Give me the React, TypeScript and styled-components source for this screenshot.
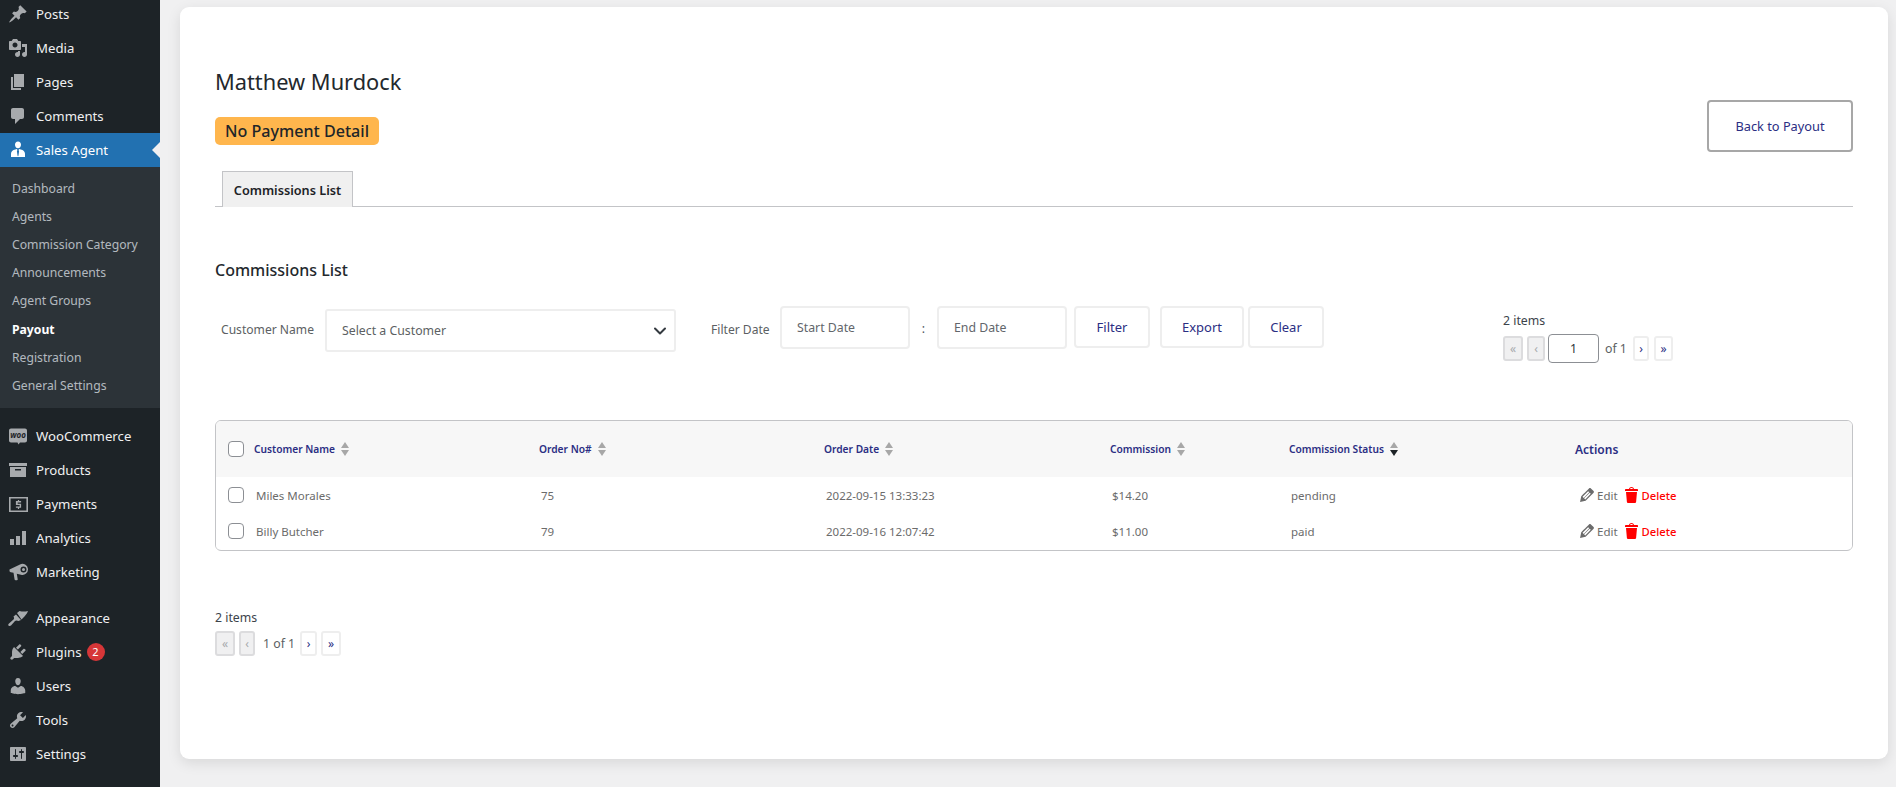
import { ReactNode } from 'react';
import styled, { createGlobalStyle } from 'styled-components';

const GlobalStyle = createGlobalStyle`
	html, body {
		margin: 0;
		padding: 0;
		background: #f0f0f1;
		overflow: hidden;
	}
	body {
		font-family: 'Noto Sans', 'Open Sans', sans-serif;
		font-size: 12.3px;
		color: #3c434a;
	}
	* {
		box-sizing: border-box;
	}
`;

const Page = styled.div`
	display: flex;
	width: 1896px;
	height: 787px;
	overflow: hidden;
`;

const Sidebar = styled.aside`
	flex: 0 0 160px;
	height: 787px;
	background: #1d2327;
	padding-top: 0;
	overflow: hidden;
`;

const MenuList = styled.ul`
	list-style: none;
	margin: -3px 0 0;
	padding: 0;
`;

const MenuGroup = styled.ul<{ $top: number }>`
	list-style: none;
	margin: ${(props) => props.$top}px 0 0;
	padding: 0;
`;

const MenuItem = styled.li<{ $active?: boolean }>`
	position: relative;
	display: flex;
	align-items: center;
	height: 34px;
	padding-left: 8px;
	color: ${(props) => (props.$active ? '#fff' : '#f0f0f1')};
	background: ${(props) => (props.$active ? '#2271b1' : 'transparent')};
	font-size: 13.2px;

	svg {
		flex: 0 0 20px;
		width: 20px;
		height: 20px;
		margin-right: 8px;
		fill: ${(props) => (props.$active ? '#fff' : '#a7aaad')};
		color: ${(props) => (props.$active ? '#fff' : '#a7aaad')};
	}

	${(props) =>
		props.$active &&
		`&::after {
			content: '';
			position: absolute;
			right: 0;
			top: 9px;
			border: 8px solid transparent;
			border-right-color: #f0f0f1;
		}`}
`;

const Count = styled.span`
	display: inline-flex;
	align-items: center;
	justify-content: center;
	width: 18px;
	height: 18px;
	margin-left: 5px;
	border-radius: 50%;
	background: #d63638;
	color: #fff;
	font-size: 11px;
`;

const SubMenu = styled.ul`
	list-style: none;
	margin: 0;
	padding: 7px 0 8.4px;
	background: #2c3338;
`;

const SubItem = styled.li<{ $current?: boolean }>`
	display: flex;
	align-items: center;
	height: 28.2px;
	padding-left: 12px;
	font-size: 12.2px;
	color: ${(props) => (props.$current ? '#fff' : 'rgba(240, 246, 252, 0.7)')};
	font-weight: ${(props) => (props.$current ? 700 : 400)};
`;

const Card = styled.main`
	width: 1708px;
	height: 752px;
	margin: 7px 0 0 20px;
	padding: 59px 35px 0;
	background: #fff;
	border-radius: 9px;
	box-shadow: 0 4px 14px rgba(0, 0, 0, 0.1);
`;

const Header = styled.header`
	display: flex;
	justify-content: space-between;
	align-items: flex-start;
`;

const Title = styled.h1`
	margin: 0;
	font-size: 21.8px;
	line-height: 32px;
	font-weight: 400;
	color: #23282d;
`;

const Badge = styled.div`
	display: inline-block;
	height: 28px;
	margin-top: 19px;
	padding: 0 10px;
	border-radius: 5px;
	background: #ffb64d;
	color: #212529;
	font-size: 16.1px;
	line-height: 28px;
	font-weight: 500;
`;

const BackButton = styled.button`
	width: 146px;
	height: 52px;
	margin-top: 34px;
	background: #fff;
	border: 2px solid #a7a7a7;
	border-radius: 4px;
	color: #2b2e83;
	font-family: inherit;
	font-size: 12.8px;
`;

const TabBar = styled.div`
	display: flex;
	height: 36px;
	margin-top: 19px;
	padding-left: 7px;
	border-bottom: 1px solid #c3c4c7;
`;

const Tab = styled.div`
	display: flex;
	align-items: center;
	justify-content: center;
	width: 131px;
	height: 36px;
	background: #f0f0f0;
	border: 1px solid #c3c4c7;
	border-bottom: none;
	color: #1d2327;
	font-size: 12.7px;
	font-weight: 600;
`;

const SectionTitle = styled.h2`
	margin: 51px 0 0;
	font-size: 16px;
	line-height: 24px;
	font-weight: 500;
	color: #23282d;
`;

const FilterRow = styled.div`
	display: flex;
	align-items: flex-start;
	height: 114px;
	margin-top: 24px;
`;

const FilterLabel = styled.label<{ $left: number; $width: number }>`
	width: ${(props) => props.$width}px;
	margin-left: ${(props) => props.$left}px;
	margin-top: 15px;
	font-size: 12.1px;
	line-height: 18px;
	color: #5c5f63;
	white-space: nowrap;
`;

const SelectBox = styled.div`
	display: flex;
	align-items: center;
	justify-content: space-between;
	width: 351px;
	height: 43px;
	margin-top: 3px;
	padding: 0 8px 0 15px;
	border: 2px solid #eee;
	border-radius: 3px;
	color: #5c5f63;
	svg {
		width: 12px;
		height: 12px;
	}
`;

const DateInput = styled.input`
	width: 130px;
	height: 43px;
	padding: 0 15px;
	border: 2px solid #eee;
	border-radius: 4px;
	font-family: inherit;
	font-size: 12.3px;
	&::placeholder {
		color: #62666b;
		opacity: 1;
	}
`;

const Separator = styled.span`
	width: 27px;
	margin-top: 14px;
	line-height: 18px;
	text-align: center;
	color: #50575e;
`;

const PlainButton = styled.button<{ $width: number; $left: number }>`
	width: ${(props) => props.$width}px;
	height: 42px;
	margin-left: ${(props) => props.$left}px;
	background: #fff;
	border: 2px solid #eee;
	border-radius: 4px;
	color: #2b2e83;
	font-family: inherit;
	font-size: 13px;
`;

const TopPager = styled.div`
	margin-left: 179px;
	margin-top: 6px;
`;

const ItemCount = styled.div`
	font-size: 12.3px;
	line-height: 18px;
	color: #3c434a;
`;

const PagerRow = styled.div<{ $top: number }>`
	display: flex;
	align-items: center;
	height: 29px;
	margin-top: ${(props) => props.$top}px;
`;

const PageBtn = styled.span<{ $disabled?: boolean; $width: number; $left?: number }>`
	display: flex;
	align-items: center;
	justify-content: center;
	width: ${(props) => props.$width}px;
	height: 25px;
	margin-left: ${(props) => props.$left ?? 0}px;
	border: 2px solid ${(props) => (props.$disabled ? '#dcdcde' : '#eee')};
	border-radius: 3px;
	background: ${(props) => (props.$disabled ? '#f0f0f1' : '#fff')};
	color: ${(props) => (props.$disabled ? '#a7aaad' : '#2b2e83')};
	font-size: 12px;
	line-height: 1;
`;

const PageInput = styled.div`
	display: flex;
	align-items: center;
	justify-content: center;
	width: 51px;
	height: 29px;
	margin-left: 3px;
	border: 1px solid #8c8f94;
	border-radius: 4px;
	color: #2c3338;
`;

const PageText = styled.span<{ $left: number; $width: number }>`
	width: ${(props) => props.$width}px;
	margin-left: ${(props) => props.$left}px;
	color: #5c5f63;
	white-space: nowrap;
`;

const TableBox = styled.div`
	height: 131px;
	border: 1px solid #c3c4c7;
	border-radius: 6px;
	overflow: hidden;
`;

const Row = styled.div<{ $head?: boolean }>`
	display: grid;
	grid-template-columns: 311px 285px 286px 179px 286px 1fr;
	align-items: center;
	height: ${(props) => (props.$head ? 56 : 36)}px;
	padding-left: 12px;
	background: ${(props) => (props.$head ? '#f7f7f7' : '#fff')};
`;

const FirstCell = styled.div`
	display: flex;
	align-items: center;
`;

const Check = styled.span`
	flex: 0 0 16px;
	width: 16px;
	height: 16px;
	margin-right: 10px;
	border: 1px solid #8c8f94;
	border-radius: 4px;
	background: #fff;
`;

const HeadCell = styled.div`
	display: flex;
	align-items: center;
	color: #2b2e83;
	font-size: 10.2px;
	font-weight: 600;
	white-space: nowrap;
`;

const ActionsHead = styled(HeadCell)`
	font-size: 12px;
`;

const SortArrows = styled.svg`
	width: 8px;
	height: 16px;
	margin-left: 6px;
`;

const Cell = styled.div`
	padding-left: 2px;
	color: #6b6b6b;
	font-size: 11.5px;
	white-space: nowrap;
`;

const Actions = styled.div`
	display: flex;
	align-items: center;
	padding-left: 2px;
	font-size: 11.5px;
	color: #6b6b6b;
`;

const ActionIcon = styled.svg`
	width: 20px;
	height: 20px;
	fill: currentColor;
`;

const DeleteLink = styled.span`
	display: flex;
	align-items: center;
	margin-left: 4px;
	color: #f00;
	font-size: 11.2px;
	font-weight: 500;
`;

const BottomPager = styled.div`
	margin-top: 58px;
`;

const icons: Record<string, ReactNode> = {
	posts: (
		<path d="M10.44 3.02l1.82-1.82 6.36 6.35-1.83 1.82c-1.05-.68-2.48-.57-3.41.36l-.75.75c-.92.93-1.04 2.35-.35 3.41l-1.83 1.82-2.41-2.41-2.8 2.79c-.42.42-3.38 2.71-3.8 2.29s1.86-3.39 2.28-3.81l2.79-2.79L4.1 9.36l1.83-1.82c1.05.69 2.48.57 3.4-.36l.75-.75c.93-.92 1.05-2.35.36-3.41z" />
	),
	media: (
		<path d="M13 11V4c0-.55-.45-1-1-1h-1.67L9 1H5L3.67 3H2c-.55 0-1 .45-1 1v7c0 .55.45 1 1 1h10c.55 0 1-.45 1-1zM7 4.5c1.38 0 2.5 1.12 2.5 2.5S8.38 9.5 7 9.5 4.5 8.38 4.5 7 5.62 4.5 7 4.5zM14 6h5v10.5c0 1.38-1.12 2.5-2.5 2.5S14 17.88 14 16.5s1.12-2.5 2.5-2.5c.17 0 .34.02.5.05V9h-3V6zm-4 8.05V13h2v3.5c0 1.38-1.12 2.5-2.5 2.5S7 17.88 7 16.5 8.12 14 9.5 14c.17 0 .34.02.5.05z" />
	),
	pages: <path d="M6 15V2h10v13H6zm-1 1h8v2H3V5h2v11z" />,
	comments: (
		<path d="M5 2h9c1.1 0 2 .9 2 2v7c0 1.1-.9 2-2 2h-2l-5 5v-5H5c-1.1 0-2-.9-2-2V4c0-1.1.9-2 2-2z" />
	),
	agent: (
		<path d="M10 1.5c1.9 0 3 1.5 3 3.2 0 1.8-1.2 3.6-3 3.6S7 6.5 7 4.7c0-1.7 1.1-3.2 3-3.2zM7.2 9.5l1.6-.4.7 1-.6 1 .6 4.4.5.9.5-.9.6-4.4-.6-1 .7-1 1.6.4c2.5.6 4.2 1.9 4.2 4.2V17H3v-3.3c0-2.3 1.7-3.6 4.2-4.2z" />
	),
	woo: (
		<>
			<path d="M3 2.5h14c1.1 0 2 .9 2 2v10c0 1.1-.9 2-2 2h-5l-1.5 2-1-2H3c-1.1 0-2-.9-2-2v-10c0-1.1.9-2 2-2z" />
			<text x="10" y="12" textAnchor="middle" fontSize="8" fontWeight="700" fontStyle="italic" fill="#1d2327">
				woo
			</text>
		</>
	),
	products: <path d="M1 3h18v3H1V3zm1 4h16v10H2V7zm5 2v1.5h6V9H7z" />,
	payments: (
		<>
			<path fillRule="evenodd" d="M1 3h19v15H1V3zm1.6 1.6v11.800h15.800V4.600H2.600z" />
			<path d="M9.900 6h1.200v1.100h2v1.400H9.700v1.300h3.400v4H11.100v1.200H9.900v-1.200h-2v-1.400h3.800v-1.300H7.900v-4h2V6z" />
		</>
	),
	analytics: <path d="M2 11h4v6H2v-6zm6-3h4v9H8V8zm6-5h4v14h-4V3z" />,
	marketing: (
		<path
			fillRule="evenodd"
			d="M1.500 7.500L12 2.500A5.500 5.500 0 1 1 13 12.700L8.800 11.700l.9 5.600c.1.600-.3 1-.9 1H7.600c-.5 0-.9-.3-1-.8L5.500 10.800l-2.700-.6C2 10 1.500 9.500 1.500 8.800zM15.500 4.500a3 3 0 1 0 0 6 3 3 0 1 0 0-6zM15.500 6a1.500 1.500 0 1 1 0 3 1.500 1.500 0 1 1 0-3z"
		/>
	),
	appearance: (
		<>
			<path d="M9 5l2.500-2c2.500.5 4.500 1 8.500 0-1 3-3.500 5.500-5 7l-1.500 1.500z" />
			<path d="M8 6.500L13 12l-2.500 1c-1-.5-2.500-1-3.500 0L3 17.500c-.5.5-2 .8-2.500 0-.5-.7-.2-1.500.5-2l4.500-4c1-1 .5-2 0-3z" />
		</>
	),
	plugins: (
		<path d="M13.110 4.360L9.870 7.600 8 5.730l3.240-3.240c.35-.34 1.050-.2 1.560.32.52.51.66 1.210.31 1.550zm-8 1.770l.91-1.120 9.010 9.010-1.190.84c-.71.71-2.630 1.160-3.820 1.160H6.140L4.900 17.260c-.59.59-1.540.59-2.120 0-.59-.58-.59-1.530 0-2.120l1.240-1.240v-3.880c0-1.130.4-3.190 1.090-3.890zm7.260 3.970l3.240-3.240c.34-.35 1.040-.21 1.550.31.52.51.66 1.210.31 1.550l-3.240 3.250z" />
	),
	users: (
		<path d="M10 9.250c-2.270 0-2.730-3.440-2.730-3.440C7 4.020 7.820 2 9.970 2c2.160 0 2.980 2.020 2.710 3.810 0 0-.41 3.440-2.680 3.440zm0 2.570L12.720 10c2.390 0 4.520 2.330 4.520 4.530v2.490s-3.650 1.130-7.240 1.130c-3.650 0-7.240-1.130-7.240-1.130v-2.490c0-2.250 1.940-4.480 4.470-4.480z" />
	),
	tools: (
		<path d="M16.680 9.770c-1.340 1.340-3.300 1.670-4.950.99l-5.410 6.520c-.99.99-2.590.99-3.580 0s-.99-2.590 0-3.570l6.520-5.420c-.68-1.650-.35-3.610.99-4.950 1.280-1.280 3.120-1.620 4.720-1.060l-2.890 2.890 2.820 2.820 2.860-2.870c.53 1.580.18 3.390-1.080 4.650zM3.810 16.210c.4.39 1.040.39 1.430 0 .4-.4.4-1.040 0-1.430-.39-.4-1.030-.4-1.430 0-.39.39-.39 1.030 0 1.430z" />
	),
	settings: (
		<path d="M18 16V4c0-.55-.45-1-1-1H3c-.55 0-1 .45-1 1v12c0 .55.45 1 1 1h14c.55 0 1-.45 1-1zM8 11h1c.55 0 1 .45 1 1s-.45 1-1 1H8v1.500c0 .28-.22.5-.5.5s-.5-.22-.5-.5V13H6c-.55 0-1-.45-1-1s.45-1 1-1h1V5.500c0-.28.22-.5.5-.5s.5.22.5.5V11zm5-2h-1c-.55 0-1-.45-1-1s.45-1 1-1h1V5.500c0-.28.22-.5.5-.5s.5.22.5.5V7h1c.55 0 1 .45 1 1s-.45 1-1 1h-1v5.500c0 .28-.22.5-.5.5s-.5-.22-.5-.5V9z" />
	),
};

function MenuIcon({ name }: { name: string }) {
	return <svg viewBox="0 0 20 20">{icons[name]}</svg>;
}

function Sort({ active }: { active?: boolean }) {
	return (
		<SortArrows viewBox="0 0 8 16">
			<path d="M4 1l4 6H0z" fill="#a7a7a7" />
			<path d="M4 15L0 9h8z" fill={active ? '#1d2327' : '#a7a7a7'} />
		</SortArrows>
	);
}

const subLinks = [
	'Dashboard',
	'Agents',
	'Commission Category',
	'Announcements',
	'Agent Groups',
	'Payout',
	'Registration',
	'General Settings',
];

const orders = [
	{ name: 'Miles Morales', no: '75', date: '2022-09-15 13:33:23', amount: '$14.20', status: 'pending' },
	{ name: 'Billy Butcher', no: '79', date: '2022-09-16 12:07:42', amount: '$11.00', status: 'paid' },
];

function App() {
	return (
		<Page>
			<GlobalStyle />
			<Sidebar>
				<MenuList>
					{[
						['posts', 'Posts'],
						['media', 'Media'],
						['pages', 'Pages'],
						['comments', 'Comments'],
					].map(([icon, label]) => (
						<MenuItem key={label}>
							<MenuIcon name={icon} />
							{label}
						</MenuItem>
					))}
					<MenuItem $active>
						<MenuIcon name="agent" />
						Sales Agent
					</MenuItem>
				</MenuList>
				<SubMenu>
					{subLinks.map((link) => (
						<SubItem key={link} $current={link === 'Payout'}>
							{link}
						</SubItem>
					))}
				</SubMenu>
				<MenuGroup $top={11}>
					{[
						['woo', 'WooCommerce'],
						['products', 'Products'],
						['payments', 'Payments'],
						['analytics', 'Analytics'],
						['marketing', 'Marketing'],
					].map(([icon, label]) => (
						<MenuItem key={label}>
							<MenuIcon name={icon} />
							{label}
						</MenuItem>
					))}
				</MenuGroup>
				<MenuGroup $top={12}>
					<MenuItem>
						<MenuIcon name="appearance" />
						Appearance
					</MenuItem>
					<MenuItem>
						<MenuIcon name="plugins" />
						Plugins
						<Count>2</Count>
					</MenuItem>
					{[
						['users', 'Users'],
						['tools', 'Tools'],
						['settings', 'Settings'],
					].map(([icon, label]) => (
						<MenuItem key={label}>
							<MenuIcon name={icon} />
							{label}
						</MenuItem>
					))}
				</MenuGroup>
			</Sidebar>
			<Card>
				<Header>
					<div>
						<Title>Matthew Murdock</Title>
						<Badge>No Payment Detail</Badge>
					</div>
					<BackButton>Back to Payout</BackButton>
				</Header>
				<TabBar>
					<Tab>Commissions List</Tab>
				</TabBar>
				<SectionTitle>Commissions List</SectionTitle>
				<FilterRow>
					<FilterLabel $left={6} $width={104}>
						Customer Name
					</FilterLabel>
					<SelectBox>
						Select a Customer
						<svg viewBox="0 0 12 12" fill="none" stroke="#343a40" strokeWidth="2" strokeLinecap="round" strokeLinejoin="round">
							<path d="M1 3.500l5 5 5-5" />
						</svg>
					</SelectBox>
					<FilterLabel $left={35} $width={69}>
						Filter Date
					</FilterLabel>
					<DateInput placeholder="Start Date" />
					<Separator>:</Separator>
					<DateInput placeholder="End Date" />
					<PlainButton $width={76} $left={7}>
						Filter
					</PlainButton>
					<PlainButton $width={84} $left={10}>
						Export
					</PlainButton>
					<PlainButton $width={76} $left={4}>
						Clear
					</PlainButton>
					<TopPager>
						<ItemCount>2 items</ItemCount>
						<PagerRow $top={4}>
							<PageBtn $disabled $width={20}>
								«
							</PageBtn>
							<PageBtn $disabled $width={18} $left={4}>
								‹
							</PageBtn>
							<PageInput>1</PageInput>
							<PageText $left={6} $width={22}>
								of 1
							</PageText>
							<PageBtn $width={16} $left={6}>
								›
							</PageBtn>
							<PageBtn $width={19} $left={5}>
								»
							</PageBtn>
						</PagerRow>
					</TopPager>
				</FilterRow>
				<TableBox>
					<Row $head>
						<FirstCell>
							<Check />
							<HeadCell>
								Customer Name
								<Sort />
							</HeadCell>
						</FirstCell>
						<HeadCell>
							Order No#
							<Sort />
						</HeadCell>
						<HeadCell>
							Order Date
							<Sort />
						</HeadCell>
						<HeadCell>
							Commission
							<Sort />
						</HeadCell>
						<HeadCell>
							Commission Status
							<Sort active />
						</HeadCell>
						<ActionsHead>Actions</ActionsHead>
					</Row>
					{orders.map((order) => (
						<Row key={order.no}>
							<FirstCell>
								<Check />
								<Cell>{order.name}</Cell>
							</FirstCell>
							<Cell>{order.no}</Cell>
							<Cell>{order.date}</Cell>
							<Cell>{order.amount}</Cell>
							<Cell>{order.status}</Cell>
							<Actions>
								<ActionIcon viewBox="0 0 20 20">
									<path d="M13.890 3.390l2.710 2.720c.46.46.42 1.240.03 1.640l-8.010 8.020-5.560 1.160 1.160-5.580s7.600-7.630 7.990-8.030c.39-.39 1.220-.39 1.680.07zm-2.730 2.790l-5.590 5.610 1.110 1.110 5.540-5.650zm-2.970 8.230l5.580-5.600-1.070-1.080-5.590 5.600z" />
								</ActionIcon>
								Edit
								<DeleteLink>
									<ActionIcon viewBox="0 0 20 20">
										<path d="M12 4h3c.6 0 1 .4 1 1v1H3V5c0-.6.5-1 1-1h3c.2-1.100 1.300-2 2.500-2s2.300.9 2.500 2zM8 4h3c-.2-.6-.9-1-1.500-1S8.200 3.400 8 4zM4 7h11l-.9 10.100c0 .5-.5.9-1 .9H5.900c-.5 0-.9-.4-1-.9L4 7z" />
									</ActionIcon>
									Delete
								</DeleteLink>
							</Actions>
						</Row>
					))}
				</TableBox>
				<BottomPager>
					<ItemCount>2 items</ItemCount>
					<PagerRow $top={2}>
						<PageBtn $disabled $width={20}>
							«
						</PageBtn>
						<PageBtn $disabled $width={16} $left={4}>
							‹
						</PageBtn>
						<PageText $left={8} $width={31}>
							1 of 1
						</PageText>
						<PageBtn $width={17} $left={6}>
							›
						</PageBtn>
						<PageBtn $width={20} $left={4}>
							»
						</PageBtn>
					</PagerRow>
				</BottomPager>
			</Card>
		</Page>
	);
}

export default App;
